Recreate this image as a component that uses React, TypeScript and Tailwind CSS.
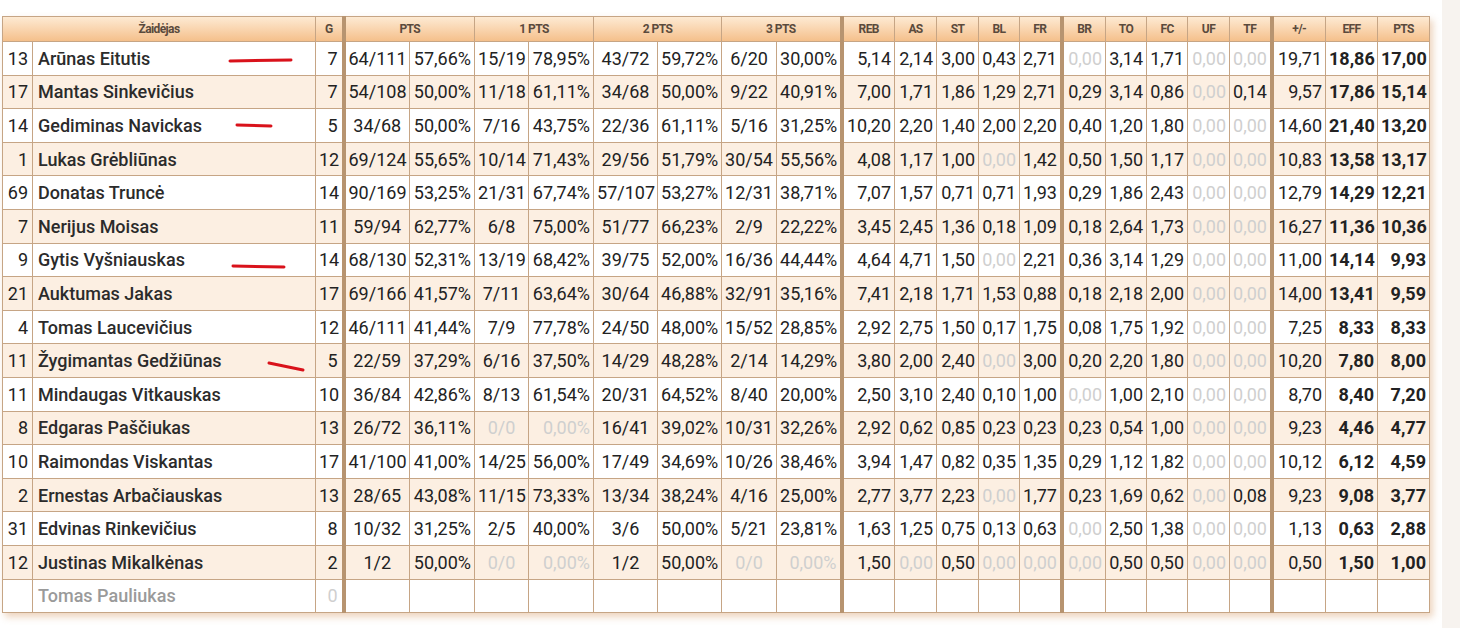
const widths = [30, 283, 28, 66, 65, 54, 65, 64, 64, 55, 65, 53, 42, 42, 41, 42, 44, 41, 41, 42, 42, 54, 52, 52];

// columns that open a new group get the thick brown rule on the left
const thick = new Set([3, 11, 16, 21]);

type Row = { no: string; name: string; g: string; v: string[]; mark?: [number, number, number, number] };

const rows: Row[] = [
  { no: "13", name: "Arūnas Eitutis", g: "7", v: ["64/111", "57,66%", "15/19", "78,95%", "43/72", "59,72%", "6/20", "30,00%", "5,14", "2,14", "3,00", "0,43", "2,71", "0,00", "3,14", "1,71", "0,00", "0,00", "19,71", "18,86", "17,00"], mark: [197, 19, 258, 18] },
  { no: "17", name: "Mantas Sinkevičius", g: "7", v: ["54/108", "50,00%", "11/18", "61,11%", "34/68", "50,00%", "9/22", "40,91%", "7,00", "1,71", "1,86", "1,29", "2,71", "0,29", "3,14", "0,86", "0,00", "0,14", "9,57", "17,86", "15,14"] },
  { no: "14", name: "Gediminas Navickas", g: "5", v: ["34/68", "50,00%", "7/16", "43,75%", "22/36", "61,11%", "5/16", "31,25%", "10,20", "2,20", "1,40", "2,00", "2,20", "0,40", "1,20", "1,80", "0,00", "0,00", "14,60", "21,40", "13,20"], mark: [204, 16, 238, 17] },
  { no: "1", name: "Lukas Grėbliūnas", g: "12", v: ["69/124", "55,65%", "10/14", "71,43%", "29/56", "51,79%", "30/54", "55,56%", "4,08", "1,17", "1,00", "0,00", "1,42", "0,50", "1,50", "1,17", "0,00", "0,00", "10,83", "13,58", "13,17"] },
  { no: "69", name: "Donatas Truncė", g: "14", v: ["90/169", "53,25%", "21/31", "67,74%", "57/107", "53,27%", "12/31", "38,71%", "7,07", "1,57", "0,71", "0,71", "1,93", "0,29", "1,86", "2,43", "0,00", "0,00", "12,79", "14,29", "12,21"] },
  { no: "7", name: "Nerijus Moisas", g: "11", v: ["59/94", "62,77%", "6/8", "75,00%", "51/77", "66,23%", "2/9", "22,22%", "3,45", "2,45", "1,36", "0,18", "1,09", "0,18", "2,64", "1,73", "0,00", "0,00", "16,27", "11,36", "10,36"] },
  { no: "9", name: "Gytis Vyšniauskas", g: "14", v: ["68/130", "52,31%", "13/19", "68,42%", "39/75", "52,00%", "16/36", "44,44%", "4,64", "4,71", "1,50", "0,00", "2,21", "0,36", "3,14", "1,29", "0,00", "0,00", "11,00", "14,14", "9,93"], mark: [200, 22, 251, 23] },
  { no: "21", name: "Auktumas Jakas", g: "17", v: ["69/166", "41,57%", "7/11", "63,64%", "30/64", "46,88%", "32/91", "35,16%", "7,41", "2,18", "1,71", "1,53", "0,88", "0,18", "2,18", "2,00", "0,00", "0,00", "14,00", "13,41", "9,59"] },
  { no: "4", name: "Tomas Laucevičius", g: "12", v: ["46/111", "41,44%", "7/9", "77,78%", "24/50", "48,00%", "15/52", "28,85%", "2,92", "2,75", "1,50", "0,17", "1,75", "0,08", "1,75", "1,92", "0,00", "0,00", "7,25", "8,33", "8,33"] },
  { no: "11", name: "Žygimantas Gedžiūnas", g: "5", v: ["22/59", "37,29%", "6/16", "37,50%", "14/29", "48,28%", "2/14", "14,29%", "3,80", "2,00", "2,40", "0,00", "3,00", "0,20", "2,20", "1,80", "0,00", "0,00", "10,20", "7,80", "8,00"], mark: [236, 19, 270, 26] },
  { no: "11", name: "Mindaugas Vitkauskas", g: "10", v: ["36/84", "42,86%", "8/13", "61,54%", "20/31", "64,52%", "8/40", "20,00%", "2,50", "3,10", "2,40", "0,10", "1,00", "0,00", "1,00", "2,10", "0,00", "0,00", "8,70", "8,40", "7,20"] },
  { no: "8", name: "Edgaras Paščiukas", g: "13", v: ["26/72", "36,11%", "0/0", "0,00%", "16/41", "39,02%", "10/31", "32,26%", "2,92", "0,62", "0,85", "0,23", "0,23", "0,23", "0,54", "1,00", "0,00", "0,00", "9,23", "4,46", "4,77"] },
  { no: "10", name: "Raimondas Viskantas", g: "17", v: ["41/100", "41,00%", "14/25", "56,00%", "17/49", "34,69%", "10/26", "38,46%", "3,94", "1,47", "0,82", "0,35", "1,35", "0,29", "1,12", "1,82", "0,00", "0,00", "10,12", "6,12", "4,59"] },
  { no: "2", name: "Ernestas Arbačiauskas", g: "13", v: ["28/65", "43,08%", "11/15", "73,33%", "13/34", "38,24%", "4/16", "25,00%", "2,77", "3,77", "2,23", "0,00", "1,77", "0,23", "1,69", "0,62", "0,00", "0,08", "9,23", "9,08", "3,77"] },
  { no: "31", name: "Edvinas Rinkevičius", g: "8", v: ["10/32", "31,25%", "2/5", "40,00%", "3/6", "50,00%", "5/21", "23,81%", "1,63", "1,25", "0,75", "0,13", "0,63", "0,00", "2,50", "1,38", "0,00", "0,00", "1,13", "0,63", "2,88"] },
  { no: "12", name: "Justinas Mikalkėnas", g: "2", v: ["1/2", "50,00%", "0/0", "0,00%", "1/2", "50,00%", "0/0", "0,00%", "1,50", "0,00", "0,50", "0,00", "0,00", "0,00", "0,50", "0,50", "0,00", "0,00", "0,50", "1,50", "1,00"] },
];

const groups: [string, number][] = [
  ["Žaidėjas", 2], ["G", 1], ["PTS", 2], ["1 PTS", 2], ["2 PTS", 2], ["3 PTS", 2],
  ["REB", 1], ["AS", 1], ["ST", 1], ["BL", 1], ["FR", 1],
  ["BR", 1], ["TO", 1], ["FC", 1], ["UF", 1], ["TF", 1],
  ["+/-", 1], ["EFF", 1], ["PTS", 1],
];

const cell = "border border-[#c6a585] px-[3px] whitespace-nowrap";
const rule = "border-l-4 border-l-[#b79470]";

function isZero(s: string) {
  return s === "0,00" || s === "0/0" || s === "0,00%";
}

export default function App() {
  let col = 0;
  return (
    <div className="flex min-h-[628px] bg-white font-['Roboto',sans-serif] text-[#222]">
      <div className="w-[1442px] pl-[2px] pt-[16px]">
        <table className="w-[1427px] table-fixed border-collapse shadow-[3px_4px_7px_rgba(214,160,110,0.45)]">
          <colgroup>
            {widths.map((w, i) => (
              <col key={i} style={{ width: w }} />
            ))}
          </colgroup>
          <thead>
            <tr className="h-[25px] bg-gradient-to-b from-[#fdead3] to-[#f4be88]">
              {groups.map(([label, span], i) => {
                const start = col;
                col += span;
                return (
                  <th
                    key={i}
                    colSpan={span}
                    className={`${cell} text-center text-[12px] font-bold tracking-tighter text-[#5a4a3c] ${thick.has(start) ? rule : ""}`}
                  >
                    {label}
                  </th>
                );
              })}
            </tr>
          </thead>
          <tbody className="text-[18px]">
            {rows.map((r, i) => (
              <tr key={i} className={`h-[33.6px] ${i % 2 ? "bg-[#fcefe2]" : "bg-white"}`}>
                <td className={`${cell} pr-[4px] text-right`}>{r.no}</td>
                <td className={`${cell} relative pl-[5px] font-medium text-[#2b2b2b]`}>
                  {r.name}
                  {r.mark && (
                    <svg className="pointer-events-none absolute left-0 top-0 h-full w-full">
                      <line x1={r.mark[0]} y1={r.mark[1]} x2={r.mark[2]} y2={r.mark[3]} stroke="#d9121b" strokeWidth="3" strokeLinecap="round" />
                    </svg>
                  )}
                </td>
                <td className={`${cell} pr-[4px] text-right`}>{r.g}</td>
                {r.v.map((v, j) => {
                  const c = j + 3;
                  const made = j < 8 && j % 2 === 0;
                  const bold = j >= 19;
                  return (
                    <td
                      key={j}
                      className={`${cell} ${made ? "text-center" : "text-right"} ${thick.has(c) ? rule : ""} ${isZero(v) ? "text-[#cfcfcf]" : ""} ${bold ? "font-bold" : ""}`}
                    >
                      {v}
                    </td>
                  );
                })}
              </tr>
            ))}
            <tr className="h-[33.6px] bg-white">
              <td className={cell}></td>
              <td className={`${cell} pl-[5px] font-medium text-[#9a9a9a]`}>Tomas Pauliukas</td>
              <td className={`${cell} pr-[4px] text-right text-[#cfcfcf]`}>0</td>
              {widths.slice(3).map((_, j) => (
                <td key={j} className={`${cell} ${thick.has(j + 3) ? rule : ""}`}></td>
              ))}
            </tr>
          </tbody>
        </table>
      </div>
      <div className="flex-1 bg-[#f7f3ef]" />
    </div>
  );
}
